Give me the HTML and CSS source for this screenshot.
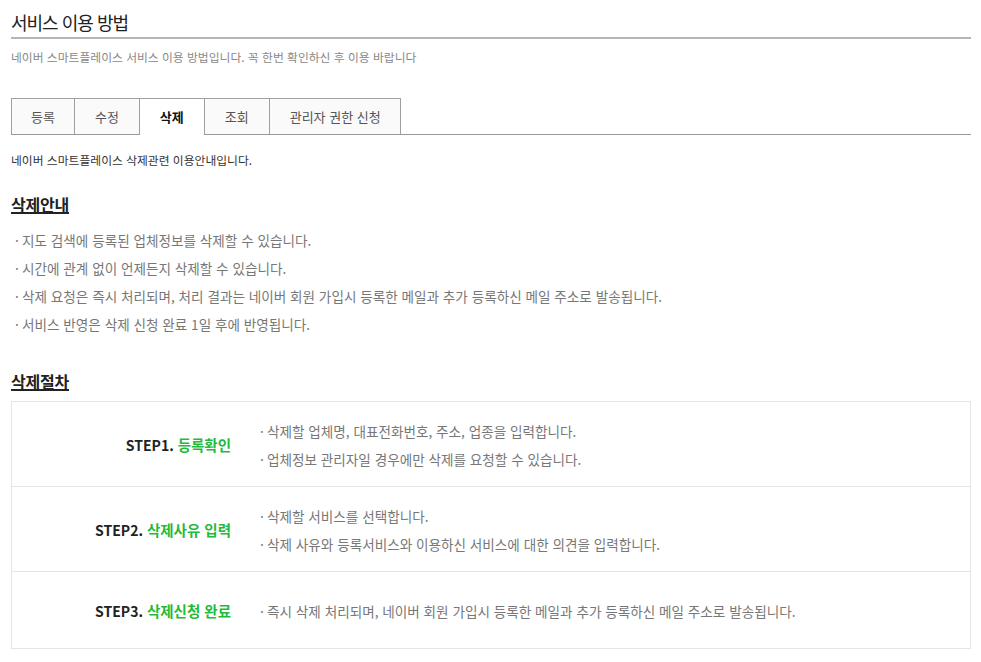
FILE: index.html
```html
<!DOCTYPE html>
<html lang="ko">
<head>
<meta charset="utf-8">
<title>서비스 이용 방법</title>
<link rel="stylesheet" href="styles.css">
</head>
<body>
<div class="page">
  <h1 class="title">서비스 이용 방법</h1>
  <p class="intro">네이버 스마트플레이스 서비스 이용 방법입니다. 꼭 한번 확인하신 후 이용 바랍니다</p>

  <ul class="tabs">
    <li class="tab">등록</li>
    <li class="tab">수정</li>
    <li class="tab is-active">삭제</li>
    <li class="tab">조회</li>
    <li class="tab">관리자 권한 신청</li>
  </ul>

  <p class="tab-desc">네이버 스마트플레이스 삭제관련 이용안내입니다.</p>

  <h2 class="sec-title">삭제안내</h2>
  <ul class="dot-list">
    <li>지도 검색에 등록된 업체정보를 삭제할 수 있습니다.</li>
    <li>시간에 관계 없이 언제든지 삭제할 수 있습니다.</li>
    <li>삭제 요청은 즉시 처리되며, 처리 결과는 네이버 회원 가입시 등록한 메일과 추가 등록하신 메일 주소로 발송됩니다.</li>
    <li>서비스 반영은 삭제 신청 완료 1일 후에 반영됩니다.</li>
  </ul>

  <h2 class="sec-title sec-title--second">삭제절차</h2>
  <div class="steps">
    <div class="step">
      <div class="step-label">STEP1. <em>등록확인</em></div>
      <ul class="dot-list step-desc">
        <li>삭제할 업체명, 대표전화번호, 주소, 업종을 입력합니다.</li>
        <li>업체정보 관리자일 경우에만 삭제를 요청할 수 있습니다.</li>
      </ul>
    </div>
    <div class="step">
      <div class="step-label">STEP2. <em>삭제사유 입력</em></div>
      <ul class="dot-list step-desc">
        <li>삭제할 서비스를 선택합니다.</li>
        <li>삭제 사유와 등록서비스와 이용하신 서비스에 대한 의견을 입력합니다.</li>
      </ul>
    </div>
    <div class="step">
      <div class="step-label">STEP3. <em>삭제신청 완료</em></div>
      <ul class="dot-list step-desc">
        <li>즉시 삭제 처리되며, 네이버 회원 가입시 등록한 메일과 추가 등록하신 메일 주소로 발송됩니다.</li>
      </ul>
    </div>
  </div>
</div>
</body>
</html>
```

FILE: styles.css
```css
body {
  margin: 0;
  background: #fff;
  font-family: "Noto Sans CJK KR", "Noto Sans", sans-serif;
}

.page {
  width: 960px;
  margin-left: 11px;
}

.title {
  margin: 0;
  padding: 10px 0 3px;
  font-size: 18px;
  line-height: 24px;
  font-weight: 400;
  letter-spacing: -1px;
  color: #222;
  border-bottom: 2px solid #b5b5b5;
}

.intro {
  margin: 10px 0 0;
  font-size: 11.8px;
  line-height: 16px;
  color: #888;
}

.tabs {
  list-style: none;
  margin: 33px 0 0;
  padding: 0;
  display: flex;
  align-items: flex-start;
  border-bottom: 1px solid #999;
}

.tab {
  box-sizing: border-box;
  height: 36px;
  padding: 0 20px;
  border-top: 1px solid #a0a0a0;
  border-left: 1px solid #a0a0a0;
  font-size: 13px;
  line-height: 35px;
  color: #555;
  background: #fafafa;
}

.tab:first-child {
  padding: 0 19px;
}

.tab:last-child {
  padding: 0 19px 0 20px;
  border-right: 1px solid #a0a0a0;
}

.tab.is-active {
  height: 37px;
  margin-bottom: -1px;
  background: #fff;
  color: #111;
  font-weight: 700;
}

.tab-desc {
  margin: 17px 0 0;
  font-size: 11.8px;
  line-height: 16px;
  color: #333;
}

.sec-title {
  width: fit-content;
  margin: 28px 0 0;
  font-size: 16px;
  line-height: 16px;
  font-weight: 700;
  letter-spacing: -0.2px;
  color: #222;
  border-bottom: 2px solid #222;
}

.sec-title--second {
  margin-top: 35px;
}

.dot-list {
  list-style: none;
  margin: 12px 0 0;
  padding: 0 0 0 4px;
  font-size: 13.6px;
  line-height: 28px;
  color: #777;
}

.dot-list li {
  display: flex;
}

.dot-list li::before {
  content: "·";
  flex: none;
  width: 7px;
}

.steps {
  margin-top: 10px;
  border: 1px solid #e5e5e5;
}

.step {
  display: flex;
  align-items: center;
  min-height: 48px;
  padding: 15px 0 13px;
}

.step + .step {
  border-top: 1px solid #e5e5e5;
}

.step-label {
  flex: none;
  width: 219px;
  text-align: right;
  font-size: 14px;
  line-height: 20px;
  font-weight: 700;
  color: #222;
}

.step-label em {
  font-style: normal;
  font-size: 14.5px;
  color: #1fbb3c;
}

.step-desc {
  margin: 0 0 0 29px;
  padding: 0;
}
```
